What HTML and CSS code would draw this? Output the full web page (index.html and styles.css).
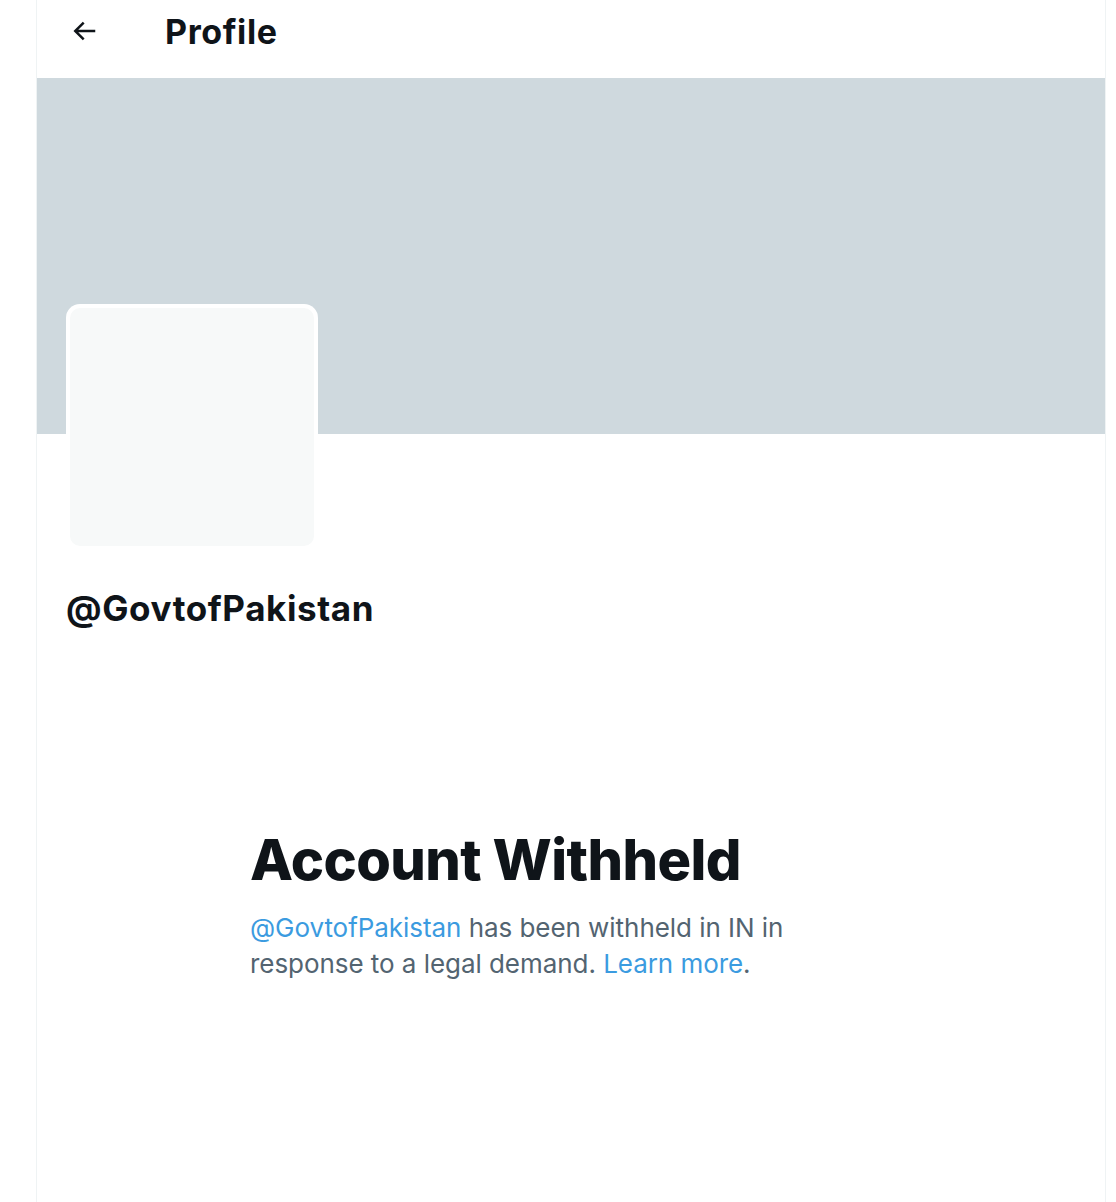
FILE: index.html
```html
<!DOCTYPE html>
<html lang="en">
<head>
<meta charset="utf-8">
<title>Profile</title>
<link rel="stylesheet" href="styles.css">
</head>
<body>
<main class="column">
  <header class="topbar">
    <div class="back">
      <svg viewBox="0 0 24 24" class="back-icon" aria-hidden="true"><path d="M7.414 13l5.043 5.04-1.414 1.42L3.586 12l7.457-7.46 1.414 1.42L7.414 11H21v2H7.414z"/></svg>
    </div>
    <h2 class="title">Profile</h2>
  </header>
  <div class="banner"></div>
  <div class="profile">
    <div class="avatar"><div class="avatar-inner"></div></div>
    <div class="handle">@GovtofPakistan</div>
  </div>
  <section class="withheld">
    <h1 class="withheld-title">Account Withheld</h1>
    <p class="withheld-text"><span class="link">@GovtofPakistan</span> has been withheld in IN in response to a legal demand. <span class="link">Learn more</span>.</p>
  </section>
</main>
</body>
</html>
```
FILE: styles.css
```css
html, body {
  margin: 0;
  padding: 0;
  background: #ffffff;
}
body {
  font-family: Inter, "Noto Sans", "Liberation Sans", sans-serif;
  color: #0f1419;
}
.column {
  margin-left: 36px;
  width: 1070px;
  min-height: 1202px;
  border-left: 1px solid #eff3f4;
  border-right: 1px solid #eff3f4;
  box-sizing: border-box;
}
.topbar {
  height: 78px;
  display: flex;
  align-items: center;
}
.back {
  width: 30px;
  height: 30px;
  margin-left: 32px;
  margin-top: -17px;
  display: flex;
}
.back-icon {
  width: 30px;
  height: 30px;
  fill: #0f1419;
}
.title {
  margin: -16px 0 0 66px;
  font-size: 34px;
  font-weight: 700;
  letter-spacing: 0.6px;
}
.banner {
  height: 356px;
  background: #cfd9de;
}
.profile {
  padding-left: 29px;
}
.avatar {
  width: 252px;
  height: 246px;
  margin-top: -130px;
  border-radius: 14px;
  background: #ffffff;
  padding: 4px;
  box-sizing: border-box;
}
.avatar-inner {
  width: 100%;
  height: 100%;
  border-radius: 10px;
  background: #f7f9f9;
}
.handle {
  margin-top: 38px;
  font-size: 35px;
  font-weight: 700;
  line-height: 40px;
  letter-spacing: 0.6px;
}
.withheld {
  margin-left: 213px;
  margin-top: 200px;
  width: 590px;
}
.withheld-title {
  margin: 0;
  font-size: 56px;
  font-weight: 800;
  line-height: 64px;
  letter-spacing: -0.6px;
}
.withheld-text {
  margin: 18px 0 0;
  font-size: 26px;
  line-height: 36px;
  color: #536471;
  letter-spacing: -0.05px;
}
.link {
  color: #3b9be0;
}
```
